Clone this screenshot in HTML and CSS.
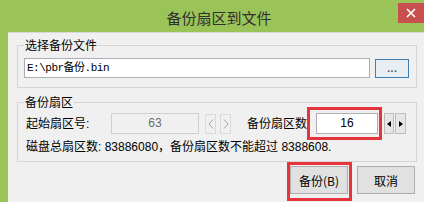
FILE: index.html
```html
<!DOCTYPE html>
<html lang="zh-CN">
<head>
<meta charset="utf-8">
<title>备份扇区到文件</title>
<link rel="stylesheet" href="styles.css">
</head>
<body>
<div class="window">
  <div class="titlebar">
    <div class="title">备份扇区到文件</div>
    <div class="close">
      <svg width="10" height="10" viewBox="0 0 10 10"><path d="M1 1 L9 9 M9 1 L1 9" stroke="#fff" stroke-width="1.6" fill="none"/></svg>
    </div>
  </div>
  <div class="frame">
    <div class="client">
      <fieldset class="group g1">
        <legend>选择备份文件</legend>
        <div class="file-row">
          <div class="textbox">E:\pbr备份.bin</div>
          <div class="btn browse">...</div>
        </div>
      </fieldset>
      <fieldset class="group g2">
        <legend>备份扇区</legend>
        <div class="sector-row">
          <span class="lbl start-lbl">起始扇区号:</span>
          <div class="field disabled">63</div>
          <div class="nav prev">
            <svg width="6" height="10" viewBox="0 0 6 10"><path d="M5 0.5 L1 5 L5 9.5" stroke="#a6a6a6" stroke-width="1" fill="none"/></svg>
          </div>
          <div class="nav next">
            <svg width="6" height="10" viewBox="0 0 6 10"><path d="M1 0.5 L5 5 L1 9.5" stroke="#a6a6a6" stroke-width="1" fill="none"/></svg>
          </div>
          <span class="lbl count-lbl">备份扇区数</span>
          <div class="hl-field"><div class="field">16</div></div>
          <div class="spin">
            <div class="spin-btn"><svg width="4" height="6" viewBox="0 0 4 6"><path d="M4 0 L0 3 L4 6 Z" fill="#000"/></svg></div>
            <div class="spin-btn"><svg width="4" height="6" viewBox="0 0 4 6"><path d="M0 0 L4 3 L0 6 Z" fill="#000"/></svg></div>
          </div>
        </div>
        <div class="info">磁盘总扇区数: 83886080，备份扇区数不能超过 8388608.</div>
      </fieldset>
      <div class="actions">
        <div class="hl-btn"><div class="btn push">备份(B)</div></div>
        <div class="btn push">取消</div>
      </div>
    </div>
  </div>
</div>
</body>
</html>
```
FILE: styles.css
```css
html, body {
  margin: 0;
  padding: 0;
  width: 424px;
  height: 202px;
  overflow: hidden;
}
body {
  font-family: "Liberation Sans", "Noto Sans CJK SC", sans-serif;
  font-size: 12px;
  color: #000;
  background: #9ac358;
}
.window {
  width: 424px;
  height: 202px;
  display: flex;
  flex-direction: column;
}
.titlebar {
  height: 32px;
  box-sizing: border-box;
  padding-top: 3px;
  display: flex;
  align-items: flex-start;
  background: #9ac358;
}
.title {
  flex: 1;
  padding-left: 40px;
  text-align: center;
  font-family: "Noto Sans CJK SC", sans-serif;
  font-size: 15px;
  line-height: 29px;
  color: #303030;
}
.close {
  width: 26px;
  height: 20px;
  background: #c7504f;
  display: flex;
  align-items: center;
  justify-content: center;
}
.frame {
  flex: 1;
  display: flex;
  padding-left: 8px;
  background: #9ac358;
}
.client {
  flex: 1;
  background: #f0f0f0;
  border-top: 1px solid #d9d9d9;
  padding: 5px 7px 0 9px;
  display: flex;
  flex-direction: column;
}
.group {
  margin: 0;
  min-width: 0;
  border: 1px solid #d5d5d5;
}
.group legend {
  font-family: "Noto Sans CJK SC", sans-serif;
  font-size: 12px;
  line-height: 14px;
  padding: 0 1px;
}
.g1 {
  padding: 6px 7px 9px 6px;
}
.g1 legend {
  margin-left: 0;
}
.g2 {
  margin-top: 7px;
  padding: 4px 7px 6px 8px;
}
.g2 legend {
  margin-left: -2px;
}
.file-row {
  display: flex;
  align-items: center;
  gap: 5px;
  height: 20px;
}
.textbox {
  flex: 1;
  height: 20px;
  box-sizing: border-box;
  border: 1px solid #abadb3;
  background: #fff;
  padding-left: 2px;
  font-family: "Liberation Mono", "Noto Sans CJK SC", monospace;
  font-size: 11px;
  letter-spacing: -0.5px;
  line-height: 18px;
  white-space: nowrap;
}
.btn {
  box-sizing: border-box;
  border: 1px solid #adadad;
  background: #e1e1e1;
  display: flex;
  align-items: center;
  justify-content: center;
  font-family: "Noto Sans CJK SC", sans-serif;
  font-size: 12px;
}
.browse {
  width: 34px;
  height: 19px;
  border-color: #3c7fb1;
  background: #e8eef3;
  color: #444;
  line-height: 12px;
  padding-bottom: 2px;
}
.sector-row {
  display: flex;
  align-items: center;
  height: 21px;
}
.lbl {
  font-family: "Liberation Sans", "Noto Sans CJK SC", sans-serif;
  line-height: 16px;
  white-space: nowrap;
}
.start-lbl {
  width: 85px;
}
.field {
  height: 21px;
  box-sizing: border-box;
  border: 1px solid #abadb3;
  background: #fff;
  text-align: center;
  line-height: 19px;
  font-size: 12px;
}
.field.disabled {
  width: 88px;
  background: #f0f0f0;
  border-color: #cfcfcf;
  color: #6d6d6d;
}
.nav {
  width: 11px;
  height: 20px;
  box-sizing: border-box;
  border: 1px solid #dadada;
  display: flex;
  align-items: center;
  justify-content: center;
}
.prev {
  margin-left: 6px;
}
.next {
  margin-left: 4px;
}
.count-lbl {
  margin-left: 16px;
  width: 60px;
}
.hl-field {
  margin: -6px 0;
  padding: 3px 1px 3px 6px;
  border: 3px solid #e5343b;
}
.hl-field .field {
  width: 62px;
  color: #000;
}
.spin {
  margin-left: 2px;
  display: flex;
  gap: 1px;
  height: 21px;
}
.spin-btn {
  width: 10px;
  box-sizing: border-box;
  border: 1px solid #bcbcbc;
  background: #e6e6e6;
  display: flex;
  align-items: center;
  justify-content: center;
}
.spin-btn + .spin-btn {
  width: 11px;
}
.info {
  margin-top: 6px;
  line-height: 15px;
  white-space: nowrap;
}
.actions {
  margin-top: 4px;
  padding-right: 2px;
  display: flex;
  justify-content: flex-end;
  gap: 9px;
}
.push {
  width: 58px;
  height: 28px;
}
.hl-btn {
  margin: -4px -4px -7px -3px;
  padding: 1px 1px 4px 0;
  border: 3px solid #e5343b;
}
```
